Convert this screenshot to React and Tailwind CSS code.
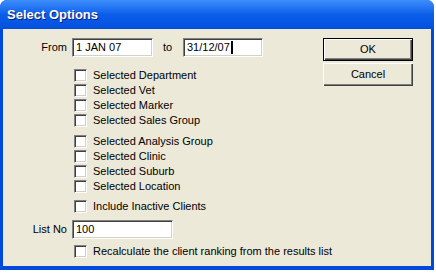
const groups = [
  ['Selected Department', 'Selected Vet', 'Selected Marker', 'Selected Sales Group'],
  ['Selected Analysis Group', 'Selected Clinic', 'Selected Suburb', 'Selected Location'],
  ['Include Inactive Clients'],
]

function Check({ label }) {
  return (
    <div className="flex h-[15px] items-center whitespace-nowrap">
      <span className="h-[13px] w-[13px] shrink-0 border border-t-[#808080] border-l-[#808080] border-b-white border-r-white bg-white shadow-[inset_1px_1px_0_#404040,inset_-1px_-1px_0_#d4d0c8]" />
      <span className="ml-[6px]">{label}</span>
    </div>
  )
}

function Field({ value, width, caret }) {
  return (
    <div
      className={`${width} flex h-[19px] items-center border border-t-[#808080] border-l-[#808080] border-b-white border-r-white bg-white pl-[3px] shadow-[inset_1px_1px_0_#404040,inset_-1px_-1px_0_#d4d0c8]`}
    >
      {value}
      {caret && <span className="ml-px h-[13px] w-[2px] bg-black" />}
    </div>
  )
}

function Button({ children, primary }) {
  return (
    <button
      className={`flex h-[23px] w-[90px] items-center justify-center bg-[#ece9d8] ${
        primary
          ? 'border border-black shadow-[inset_1px_1px_0_#fff,inset_-1px_-1px_0_#404040,inset_-2px_-2px_0_#808080]'
          : 'shadow-[inset_1px_1px_0_#fff,inset_-1px_-1px_0_#404040,inset_-2px_-2px_0_#808080]'
      }`}
    >
      {children}
    </button>
  )
}

export default function App() {
  return (
    <div className="h-[273px] w-[436px] bg-white font-['Liberation_Sans',Arial,sans-serif] text-[11px] text-black">
      <div className="flex h-[270px] w-[434px] flex-col overflow-hidden rounded-t-[7px] bg-[#0049dc]">
        {/* title bar */}
        <div className="flex h-[29px] items-center bg-gradient-to-b from-[#3d8dfb] via-[#0b5ee9] to-[#0350df] pl-[7px]">
          <span className="text-[13px] font-bold text-white [text-shadow:1px_1px_0_#0a1e7a]">Select Options</span>
        </div>

        {/* body */}
        <div className="mx-[3px] flex h-[237px] bg-[#ece9d8] pt-[9px]">
          <div className="w-[320px] shrink-0">
            <div className="flex h-[19px] items-center">
              <span className="w-[65px] pr-[1px] text-right">From</span>
              <div className="ml-[4px]">
                <Field value="1 JAN 07" width="w-[81px]" />
              </div>
              <span className="ml-[10px] w-[20px]">to</span>
              <Field value="31/12/07" width="w-[80px]" caret />
            </div>

            <div className="ml-[71px]">
              {groups.map((g, i) => (
                <div key={i} className={i === 0 ? 'mt-[11px]' : i === 1 ? 'mt-[6px]' : 'mt-[5px]'}>
                  {g.map((label) => (
                    <Check key={label} label={label} />
                  ))}
                </div>
              ))}
            </div>

            <div className="mt-[6px] flex h-[18px] items-center">
              <span className="w-[64px] text-right">List No</span>
              <div className="ml-[5px]">
                <Field value="100" width="w-[101px]" />
              </div>
            </div>

            <div className="ml-[71px] mt-[6px]">
              <Check label="Recalculate the client ranking from the results list" />
            </div>
          </div>

          <div className="flex flex-col gap-[2px]">
            <Button primary>OK</Button>
            <Button>Cancel</Button>
          </div>
        </div>
      </div>
    </div>
  )
}
